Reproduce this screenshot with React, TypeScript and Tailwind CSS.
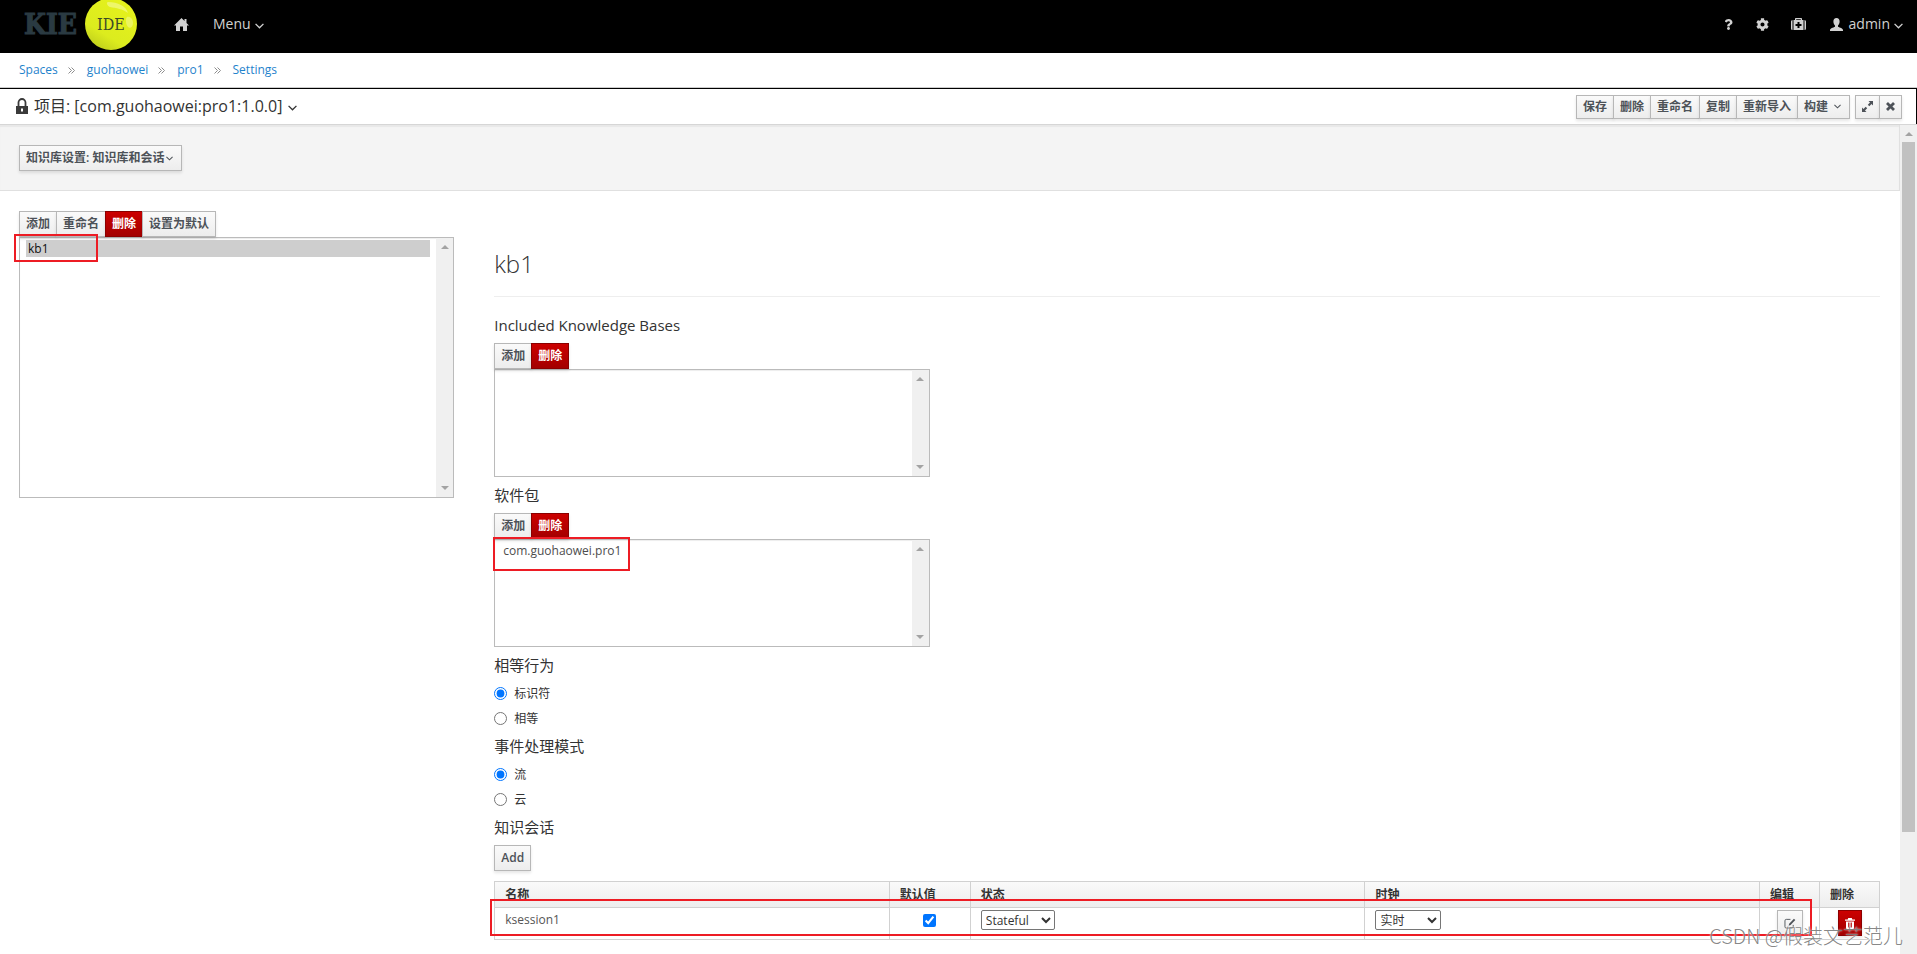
import { useState, type ReactNode } from 'react'
import { FaCog, FaQuestion } from 'react-icons/fa'

const breadcrumbs = ['Spaces', 'guohaowei', 'pro1', 'Settings']
const editorActions = ['保存', '删除', '重命名', '复制', '重新导入']

const btnBase =
  'px-[6px] border text-xs shadow-[0_2px_3px_rgba(0,0,0,0.1)] whitespace-nowrap flex items-center'
const btnColors = 'border-[#b7b7b7] bg-gradient-to-b from-[#fafafa] to-[#ededed] font-semibold text-[#4d5258]'
const btn = `h-[26px] ${btnBase} ${btnColors}`
const btnSmall = `h-6 ${btnBase} ${btnColors}`
const btnDanger = `h-[26px] ${btnBase} border-[#8b0000] bg-gradient-to-b from-[#cc0000] to-[#a30000] font-bold text-white`

function Chevron({ className }: { className: string }) {
  return (
    <svg viewBox="0 0 8 5" className={className} fill="none" stroke="currentColor" strokeWidth="1.2" aria-hidden="true">
      <path d="M0.5 0.6 4 4 7.5 0.6" />
    </svg>
  )
}

function Logo() {
  return (
    <svg width="120" height="53" viewBox="0 0 120 53" role="img" aria-label="KIE IDE">
      <defs>
        <linearGradient id="ball" x1="0.8" y1="0" x2="0.2" y2="1">
          <stop offset="0" stopColor="#e6f21c" />
          <stop offset="0.7" stopColor="#dcec1e" />
          <stop offset="1" stopColor="#bccb1c" />
        </linearGradient>
      </defs>
      <text
        x="4"
        y="34"
        fontSize="28"
        fontWeight="700"
        fill="#2a3a42"
        stroke="#2a3a42"
        strokeWidth="1"
        fontFamily="'DejaVu Serif Condensed', 'DejaVu Serif', serif"
      >
        KIE
      </text>
      <circle cx="91" cy="24" r="26" fill="url(#ball)" />
      <path d="M88 2c10 0 18 4 20 11-5-4-12-5-18-6-3-1-4-5-2-5z" fill="#f0f77e" opacity="0.8" />
      <path d="M107 17c3-1 6 2 6 6s-3 6-5 4-3-8-1-10z" fill="#f0f77e" opacity="0.7" />
      <text x="77" y="30" fontSize="16" fill="#3c4a28" fontFamily="'DejaVu Serif Condensed', 'DejaVu Serif', serif">
        IDE
      </text>
    </svg>
  )
}

function HomeIcon() {
  return (
    <svg width="15" height="13" viewBox="0 0 15 13" fill="currentColor" aria-hidden="true">
      <path d="M7.500 0 10.500 3V1h2v4L15 7.400H13V13H9V8.500H6V13H2V7.400H0z" />
    </svg>
  )
}

function LockIcon() {
  return (
    <svg width="12" height="16" viewBox="0 0 12 16" aria-hidden="true">
      <path d="M2.500 8V4.500a3.500 3.500 0 0 1 7 0V8" fill="none" stroke="#3a3a3a" strokeWidth="1.800" />
      <path d="M0 8h12v8H0z" fill="#3a3a3a" />
      <path d="M5 10.500h2v3H5z" fill="#fff" />
    </svg>
  )
}

function MedkitIcon() {
  return (
    <svg width="15" height="12" viewBox="0 0 15 12" fill="currentColor" aria-hidden="true">
      <path d="M0 3.500A1.500 1.500 0 0 1 1.500 2V12A1.500 1.500 0 0 1 0 10.500zM15 3.500A1.500 1.500 0 0 0 13.500 2V12a1.500 1.500 0 0 0 1.500-1.500z" />
      <path
        fillRule="evenodd"
        d="M2.500 2H4V.8A.8.8 0 0 1 4.800 0h5.400a.8.8 0 0 1 .8.800V2h1.500v10h-10zM5.200 2h4.600V1.200H5.200zM6.500 4v2h-2v2h2v2h2V8h2V6h-2V4z"
      />
    </svg>
  )
}

function UserIcon() {
  return (
    <svg width="13" height="13" viewBox="0 0 13 13" fill="currentColor" aria-hidden="true">
      <path d="M6.500 0C8.600 0 9.600 1.500 9.600 3.500c0 1.700-.7 3.300-1.600 4v1.300c1.800.9 5 1.600 5 3.200v1H0v-1c0-1.600 3.200-2.300 5-3.200V7.500c-.9-.7-1.600-2.300-1.600-4C3.400 1.500 4.400 0 6.500 0z" />
    </svg>
  )
}

function ExpandIcon() {
  return (
    <svg width="11" height="11" viewBox="0 0 11 11" fill="currentColor" aria-hidden="true">
      <path d="M6.500 0H11v4.500L9.500 3 7.300 5.200 5.800 3.700 8 1.500zM4.500 11H0V6.500L1.500 8l2.200-2.200 1.500 1.500L3 9.500z" />
    </svg>
  )
}

function CloseIcon() {
  return (
    <svg width="9" height="9" viewBox="0 0 9 9" fill="none" stroke="currentColor" strokeWidth="2.800" aria-hidden="true">
      <path d="M1 1l7 7M8 1 1 8" />
    </svg>
  )
}

function EditIcon() {
  return (
    <svg width="12" height="11" viewBox="0 0 13 12" fill="none" stroke="currentColor" aria-hidden="true">
      <path d="M7 1.500H2.500a1.500 1.500 0 0 0-1.500 1.500v6.500A1.500 1.500 0 0 0 2.500 11h6a1.500 1.500 0 0 0 1.500-1.500V7.500" />
      <path d="M5 8.500l.6-2.300L10.800.8l1.500 1.500-5.200 5.400z" fill="currentColor" stroke="none" />
    </svg>
  )
}

function TrashIcon() {
  return (
    <svg width="10" height="11" viewBox="0 0 10 11" fill="currentColor" aria-hidden="true">
      <path
        fillRule="evenodd"
        d="M3.200 0h3.600l.5 1.500H10v1.200H0V1.500h2.700zM1 3.400h8V10a1 1 0 0 1-1 1H2a1 1 0 0 1-1-1zM3 4.500v5h.8v-5zm1.600 0v5h.8v-5zm1.600 0v5H7v-5z"
      />
    </svg>
  )
}

function ScrollArrow({ down }: { down?: boolean }) {
  return (
    <svg width="8" height="4" viewBox="0 0 8 4" fill="#a3a3a3" aria-hidden="true">
      <path d={down ? 'M0 0h8L4 4z' : 'M0 4h8L4 0z'} />
    </svg>
  )
}

function ListBox({ label, options, selected, rows, className }: {
  label: string
  options: string[]
  selected?: string
  rows: number
  className: string
}) {
  return (
    <div className={`flex border border-[#bbb] bg-white shadow-[inset_0_1px_1px_rgba(0,0,0,0.075)] ${className}`}>
      <select
        aria-label={label}
        size={rows}
        defaultValue={selected}
        className="flex-1 min-w-0 px-[6px] py-[2px] text-xs text-[#4d4d4d] overflow-hidden outline-none"
      >
        {options.map((o) => (
          <option key={o} value={o} className="h-[17px] leading-[17px] px-[2px] py-0">{o}</option>
        ))}
      </select>
      <div className="w-[17px] bg-[#f0f0f0] flex flex-col items-center justify-between py-[7px]">
        <ScrollArrow />
        <ScrollArrow down />
      </div>
    </div>
  )
}

function FieldLabel({ children }: { children: ReactNode }) {
  return <h4 className="text-[15px] leading-5 text-[#333]">{children}</h4>
}

function RadioGroup({ name, options }: { name: string; options: string[] }) {
  const [value, setValue] = useState(options[0])

  return (
    <div>
      {options.map((o) => (
        <label key={o} className="flex items-center gap-[7px] h-[25px] text-xs text-[#333]">
          <input
            type="radio"
            name={name}
            checked={value === o}
            onChange={() => setValue(o)}
            className="w-[13px] h-[13px]"
          />
          {o}
        </label>
      ))}
    </div>
  )
}

function SessionTable() {
  const th = 'h-[26px] px-[10px] border border-[#d1d1d1] text-left font-semibold'
  const td = 'h-8 px-[10px] pt-[2px] border border-[#d1d1d1] align-top'
  const select = 'block h-5 border border-[#767676] rounded-[2px] bg-white text-[#333]'

  return (
    <table className="w-full table-fixed border-collapse text-xs text-[#333]">
      <colgroup>
        <col />
        <col className="w-[81px]" />
        <col />
        <col />
        <col className="w-[60px]" />
        <col className="w-[60px]" />
      </colgroup>
      <thead>
        <tr className="bg-gradient-to-b from-[#fafafa] to-[#ededed]">
          <th className={th}>名称</th>
          <th className={th}>默认值</th>
          <th className={th}>状态</th>
          <th className={th}>时钟</th>
          <th className={th}>编辑</th>
          <th className={th}>删除</th>
        </tr>
      </thead>
      <tbody>
        <tr>
          <td className={`${td} leading-5 text-[#555]`}>ksession1</td>
          <td className={td}>
            <input type="checkbox" defaultChecked aria-label="默认值" className="block mx-auto mt-1 w-[13px] h-[13px]" />
          </td>
          <td className={td}>
            <select aria-label="状态" className={`${select} w-[74px]`}>
              <option>Stateful</option>
              <option>Stateless</option>
            </select>
          </td>
          <td className={td}>
            <select aria-label="时钟" className={`${select} w-[66px]`}>
              <option>实时</option>
              <option>伪时钟</option>
            </select>
          </td>
          <td className={td}>
            <button aria-label="编辑" className={`${btn} mx-auto`}>
              <EditIcon />
            </button>
          </td>
          <td className={td}>
            <button aria-label="删除" className={`${btnDanger} mx-auto`}>
              <TrashIcon />
            </button>
          </td>
        </tr>
      </tbody>
    </table>
  )
}

export default function App() {
  return (
    <div className="relative h-screen flex flex-col overflow-hidden bg-white font-['Open_Sans','Noto_Sans_CJK_SC',sans-serif] text-[#333]">
      <header className="h-[53px] shrink-0 bg-black text-[#d1d1d1] text-sm flex items-center justify-between pl-5 pr-[14px]">
        <nav className="flex items-center">
          <Logo />
          <div className="flex items-center pb-[5px]">
            <a href="#home" aria-label="Home" className="ml-[34px]">
              <HomeIcon />
            </a>
            <button className="ml-6 flex items-center gap-1">
              Menu <Chevron className="w-[9px] h-[6px] mt-[3px]" />
            </button>
          </div>
        </nav>
        <div className="flex items-center pb-[5px]">
          <button aria-label="Help" className="mr-[22px]"><FaQuestion size={11} /></button>
          <button aria-label="Settings" className="mr-[22px]"><FaCog size={13} /></button>
          <button aria-label="Tools" className="mr-6"><MedkitIcon /></button>
          <button className="flex items-center gap-[6px]">
            <UserIcon />
            <span className="flex items-center gap-1">
              admin <Chevron className="w-[9px] h-[6px] mt-[3px]" />
            </span>
          </button>
        </div>
      </header>

      <nav className="h-[35px] shrink-0 flex items-center px-[19px] pb-px text-xs" aria-label="Breadcrumb">
        {breadcrumbs.map((name, i) => (
          <span key={name} className="flex items-center">
            {i > 0 && (
              <svg viewBox="0 0 7 7" className="w-[7px] h-[7px] ml-[10px] mr-3" fill="none" stroke="#8c8c8c" aria-hidden="true">
                <path d="M.5.5l3 3-3 3M3.500.5l3 3-3 3" />
              </svg>
            )}
            <a href={`#${name}`} className="text-[#1f83cc]">{name}</a>
          </span>
        ))}
      </nav>

      <div className="h-9 shrink-0 border-t border-r border-black shadow-[0_-1px_0_#ccc] flex items-center justify-between pl-4 pr-[14px]">
        <div className="flex items-center pb-[2px]">
          <LockIcon />
          <h1 className="ml-[6px] text-base">
            <button className="flex items-center gap-[6px]">
              项目: [com.guohaowei:pro1:1.0.0] <Chevron className="w-[9px] h-[6px] mt-1" />
            </button>
          </h1>
        </div>
        <div className="flex gap-[5px]">
          <div className="flex -space-x-px">
            {editorActions.map((label) => (
              <button key={label} className={btnSmall}>{label}</button>
            ))}
            <button className={`${btnSmall} gap-[6px]`}>
              构建 <Chevron className="w-[7px] h-[5px] mr-[2px]" />
            </button>
          </div>
          <div className="flex -space-x-px">
            <button aria-label="Maximize" className={btnSmall}><ExpandIcon /></button>
            <button aria-label="Close" className={btnSmall}><CloseIcon /></button>
          </div>
        </div>
      </div>

      <div className="flex-1 min-h-0 flex border-t border-[#d6d6d6]">
        <main className="flex-1 min-w-0 overflow-hidden">
          <div className="h-[66px] bg-[#f4f4f4] border-b border-r border-[#e0e0e0] shadow-[inset_0_2px_1px_#e8e8e8] px-[19px] pt-5">
            <button className={btn}>
              知识库设置: 知识库和会话 <Chevron className="w-[7px] h-[5px] ml-[2px] mr-[2px]" />
            </button>
          </div>

          <div className="grid grid-cols-4 gap-10 pl-[19px] pr-5 pt-5">
            <section>
              <div className="flex -space-x-px">
                <button className={btn}>添加</button>
                <button className={btn}>重命名</button>
                <button className={btnDanger}>删除</button>
                <button className={btn}>设置为默认</button>
              </div>
              <ListBox label="知识库" options={['kb1']} selected="kb1" rows={10} className="h-[261px]" />
            </section>

            <section className="col-span-3">
              <h2 className="mt-[33px] pb-3 border-b border-[#eee] text-2xl leading-10 font-light">kb1</h2>

              <div className="mt-[18px] flex flex-col gap-2">
                <FieldLabel>Included Knowledge Bases</FieldLabel>
                <div className="grid grid-cols-3 gap-x-10">
                  <div>
                    <div className="flex -space-x-px">
                      <button className={btn}>添加</button>
                      <button className={btnDanger}>删除</button>
                    </div>
                    <ListBox label="Included Knowledge Bases" options={[]} rows={5} className="h-[108px]" />
                  </div>
                </div>
              </div>

              <div className="mt-2 flex flex-col gap-2">
                <FieldLabel>软件包</FieldLabel>
                <div className="grid grid-cols-3 gap-x-10">
                  <div>
                    <div className="flex -space-x-px">
                      <button className={btn}>添加</button>
                      <button className={btnDanger}>删除</button>
                    </div>
                    <ListBox label="软件包" options={['com.guohaowei.pro1']} rows={5} className="h-[108px]" />
                  </div>
                </div>
              </div>

              <div className="mt-2 flex flex-col gap-[5px]">
                <div className="flex flex-col gap-[6px]">
                  <FieldLabel>相等行为</FieldLabel>
                  <RadioGroup name="equals" options={['标识符', '相等']} />
                </div>
                <div className="flex flex-col gap-[6px]">
                  <FieldLabel>事件处理模式</FieldLabel>
                  <RadioGroup name="mode" options={['流', '云']} />
                </div>
                <div className="flex flex-col items-start gap-2">
                  <FieldLabel>知识会话</FieldLabel>
                  <button className={btn}>Add</button>
                </div>
              </div>

              <div className="mt-[10px]">
                <SessionTable />
              </div>
            </section>
          </div>
        </main>

        <div className="w-[17px] shrink-0 bg-[#f0f0f0] flex flex-col items-center pt-[7px]">
          <ScrollArrow />
          <div className="mt-[6px] w-[13px] h-[84%] bg-[#c1c1c1]" />
        </div>
      </div>

      {/* highlight boxes drawn over the page */}
      <div className="absolute left-[14px] top-[234px] w-[84px] h-7 border-2 border-[#ed1c24] pointer-events-none" />
      <div className="absolute left-[493px] top-[537px] w-[137px] h-[34px] border-2 border-[#ed1c24] pointer-events-none" />
      <div className="absolute left-[490px] right-[105px] top-[899px] h-[37px] border-2 border-[#ed1c24] pointer-events-none" />
      <span className="absolute right-[14px] bottom-1 text-xl leading-7 font-light text-[#777]/90 [text-shadow:0_0_2px_#fff] font-['Noto_Sans_CJK_SC',sans-serif] pointer-events-none">
        CSDN @假装文艺范儿
      </span>
    </div>
  )
}
